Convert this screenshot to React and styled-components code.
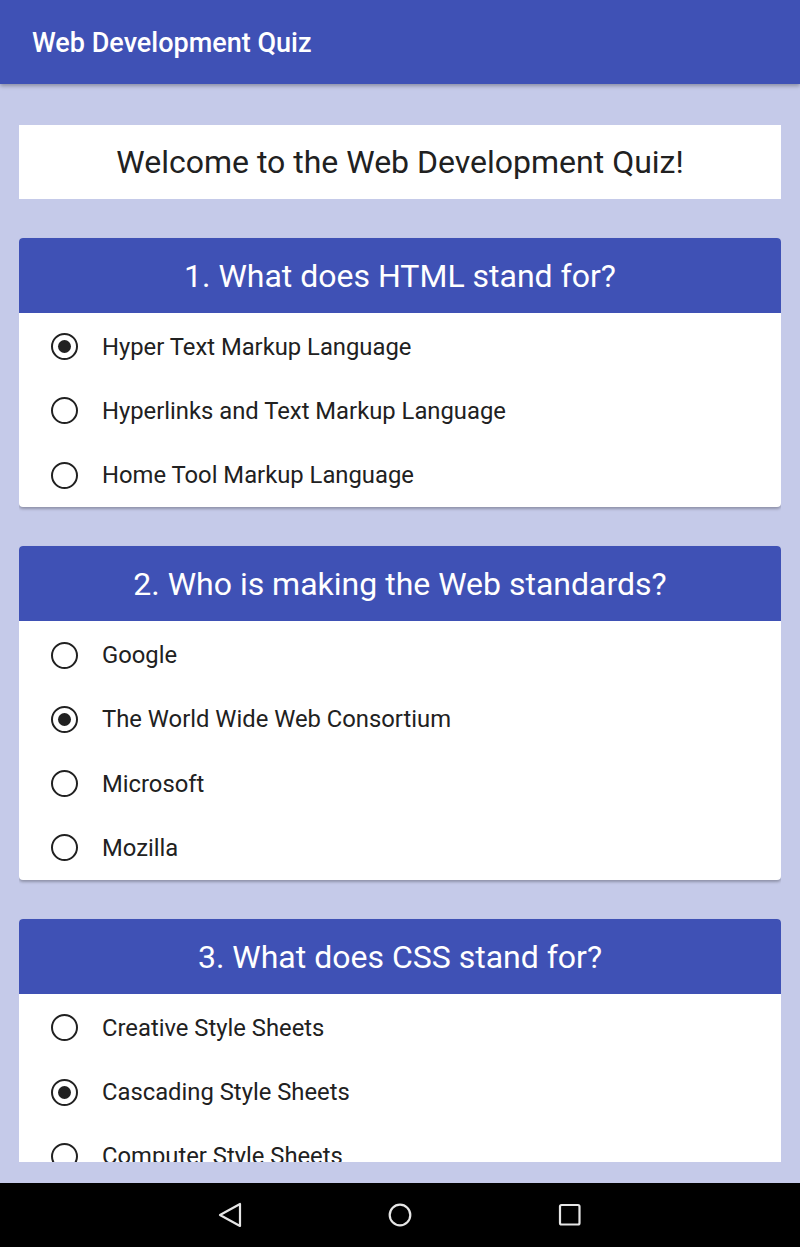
import React from "react";
import styled, { createGlobalStyle } from "styled-components";

const GlobalStyle = createGlobalStyle`
  html, body { margin: 0; padding: 0; height: 100%; }
  body { font-family: Roboto, "Noto Sans", sans-serif; background: #C5CAE9; }
  #root { height: 100%; }
`;

const Screen = styled.div`
  display: flex;
  flex-direction: column;
  height: 100vh;
  background: #C5CAE9;
`;

const AppBar = styled.header`
  flex: 0 0 84px;
  display: flex;
  align-items: center;
  padding: 2px 32px 0;
  box-sizing: border-box;
  background: #3F51B5;
  box-shadow: 0 2px 4px rgba(0, 0, 0, 0.3);
  position: relative;
  z-index: 2;
`;

const AppTitle = styled.h1`
  margin: 0;
  font-size: 27px;
  font-weight: 500;
  color: #ffffff;
`;

const Body = styled.main`
  flex: 1 1 auto;
  min-height: 0;
  display: flex;
  flex-direction: column;
  padding: 0 19px 21px;
`;

const Scroll = styled.div`
  flex: 1 1 auto;
  min-height: 0;
  overflow: hidden;
  display: flex;
  flex-direction: column;
  gap: 39px;
  padding-top: 41px;
`;

const Welcome = styled.div`
  flex: 0 0 74px;
  display: flex;
  align-items: center;
  justify-content: center;
  background: #ffffff;
  font-size: 32px;
  color: #212121;
`;

const Card = styled.section`
  flex: 0 0 auto;
  background: #ffffff;
  border-radius: 4px;
  box-shadow: 0 2px 3px rgba(0, 0, 0, 0.28);
  overflow: hidden;
`;

const CardHeader = styled.h2`
  margin: 0;
  height: 75px;
  display: flex;
  align-items: center;
  justify-content: center;
  background: #3F51B5;
  color: #ffffff;
  font-size: 32px;
  font-weight: 400;
`;

const Options = styled.div`
  display: flex;
  flex-direction: column;
  padding-top: 1.5px;
`;

const Option = styled.label`
  height: 64.3px;
  display: flex;
  align-items: center;
  padding-left: 32px;
  font-size: 23.8px;
  color: #212121;
`;

const Radio = styled.span`
  box-sizing: border-box;
  width: 27px;
  height: 27px;
  border: 2.5px solid #212121;
  border-radius: 50%;
  display: flex;
  align-items: center;
  justify-content: center;
  margin-right: 24px;
  flex-shrink: 0;

  &::after {
    content: "";
    width: 13px;
    height: 13px;
    border-radius: 50%;
    background: #212121;
    display: ${(p) => (p.$checked ? "block" : "none")};
  }
`;

const NavBar = styled.nav`
  flex: 0 0 64px;
  background: #000000;
  display: flex;
  align-items: center;
  justify-content: center;
`;

const NavButton = styled.div`
  width: 170px;
  display: flex;
  justify-content: center;
  align-items: center;
`;

const questions = [
  {
    q: "1. What does HTML stand for?",
    options: [
      "Hyper Text Markup Language",
      "Hyperlinks and Text Markup Language",
      "Home Tool Markup Language",
    ],
    selected: 0,
  },
  {
    q: "2. Who is making the Web standards?",
    options: ["Google", "The World Wide Web Consortium", "Microsoft", "Mozilla"],
    selected: 1,
  },
  {
    q: "3. What does CSS stand for?",
    options: [
      "Creative Style Sheets",
      "Cascading Style Sheets",
      "Computer Style Sheets",
      "Colorful Style Sheets",
    ],
    selected: 1,
  },
];

export default function App() {
  return (
    <Screen>
      <GlobalStyle />
      <AppBar>
        <AppTitle>Web Development Quiz</AppTitle>
      </AppBar>
      <Body>
        <Scroll>
          <Welcome>Welcome to the Web Development Quiz!</Welcome>
          {questions.map((item) => (
            <Card key={item.q}>
              <CardHeader>{item.q}</CardHeader>
              <Options>
                {item.options.map((o, i) => (
                  <Option key={o}>
                    <Radio $checked={i === item.selected} />
                    {o}
                  </Option>
                ))}
              </Options>
            </Card>
          ))}
        </Scroll>
      </Body>
      <NavBar>
        <NavButton>
          <svg width="26" height="26" viewBox="0 0 26 26">
            <path
              d="M23 2 L23 24 L3 13 Z"
              fill="none"
              stroke="#e6e6e6"
              strokeWidth="2.2"
              strokeLinejoin="round"
            />
          </svg>
        </NavButton>
        <NavButton>
          <svg width="26" height="26" viewBox="0 0 26 26">
            <circle cx="13" cy="13" r="10.3" fill="none" stroke="#e6e6e6" strokeWidth="2.2" />
          </svg>
        </NavButton>
        <NavButton>
          <svg width="26" height="26" viewBox="0 0 26 26">
            <rect x="3" y="3" width="19.5" height="19.5" rx="1.5" fill="none" stroke="#e6e6e6" strokeWidth="2.2" />
          </svg>
        </NavButton>
      </NavBar>
    </Screen>
  );
}
